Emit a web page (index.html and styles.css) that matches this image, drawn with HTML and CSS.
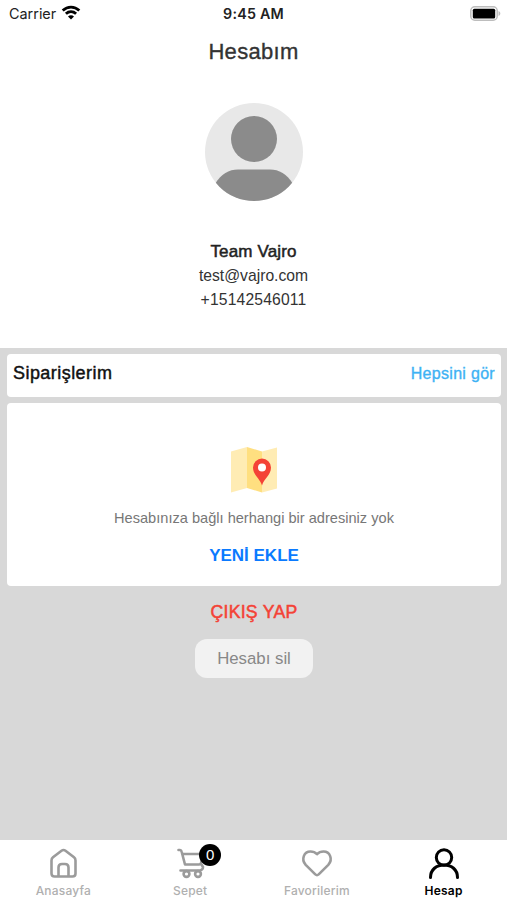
FILE: index.html
```html
<!DOCTYPE html>
<html lang="tr">
<head>
<meta charset="utf-8">
<title>Hesabım</title>
<link rel="stylesheet" href="styles.css">
</head>
<body>
<div class="app">
  <header class="status">
    <div class="carrier"><span>Carrier</span>
      <svg width="20" height="15" viewBox="0 0 20 15" fill="none" stroke="#000" stroke-width="2.8"><path d="M1.700 5.600C6.600.900 13.400.900 18.300 5.600M4.900 8.800c3-2.800 7.200-2.800 10.200 0"/><path d="M7 11.400c1.800-1.600 4.200-1.600 6 0l-3 3z" fill="#000" stroke="none"/></svg>
    </div>
    <div class="clock">9:45 AM</div>
    <svg class="battery" width="31" height="15" viewBox="0 0 31 15"><rect x=".8" y=".8" width="26.4" height="13.4" rx="4" fill="#fff" stroke="#bdbdbd" stroke-width="1.5"/><rect x="2.8" y="2.8" width="22.4" height="9.6" rx="1.5"/><path d="M28.500 5c2.400 1 2.400 4 0 5z" fill="#bdbdbd"/></svg>
  </header>
  <section class="profile">
    <h1>Hesabım</h1>
    <svg class="avatar" width="98" height="98" viewBox="0 0 98 98"><defs><clipPath id="disc"><circle cx="49" cy="49" r="49"/></clipPath></defs><circle cx="49" cy="49" r="49" fill="#e8e8e8"/><g fill="#8b8b8b" clip-path="url(#disc)"><circle cx="49" cy="36" r="23"/><path d="M10 81C16 71 24 66.500 33 66.500h32c9 0 17 4.500 23 14.500v20H10z"/></g></svg>
    <div class="name">Team Vajro</div>
    <div class="mail">test@vajro.com</div>
    <div class="phone">+15142546011</div>
  </section>
  <main class="content">
    <div class="card orders"><span class="orders-title">Siparişlerim</span><span class="see-all">Hepsini gör</span></div>
    <div class="card address">
      <svg class="map" width="46" height="46" viewBox="0 0 46 46"><path d="M0 4.500 16 0v41L0 45.500z" fill="#ffecb4"/><path d="m16 0 15 4.500v41L16 41z" fill="#ffdf80"/><path d="m31 4.500 15-4v41l-15 4z" fill="#ffecb4"/><path d="M31 38.500c-2-7-9-10.500-9-18a9 9 0 0 1 18 0c0 7.500-7 11-9 18z" fill="#f44236"/><circle cx="31" cy="20.500" r="4" fill="#fff"/></svg>
      <p class="empty">Hesabınıza bağlı herhangi bir adresiniz yok</p>
      <div class="add">YENİ EKLE</div>
    </div>
    <div class="logout">ÇIKIŞ YAP</div>
    <button class="delete">Hesabı sil</button>
  </main>
  <nav class="tabs">
    <div class="tab"><svg width="34" height="34" viewBox="0 0 34 34"><path d="M5.500 14.500q0-2 1.500-3.200L15.500 4.700q2-1.400 4 0L28 11.300q1.500 1.200 1.500 3.200v13q0 3-3 3h-18q-3 0-3-3zM12.500 30v-8.500q0-3.500 3.500-3.500h3q3.500 0 3.500 3.500V30"/></svg><span>Anasayfa</span></div>
    <div class="tab"><svg width="34" height="34" viewBox="0 0 34 34"><path d="M5.500 4H7q1.300 0 1.600 1.500L12 18.500h14q1.800 0 2.200-2L30 8H9.300M7.500 24.500h19.500q3-.7 3-3.500l-1.500-2.500"/><circle cx="13.500" cy="28" r="2.900"/><circle cx="25" cy="28" r="2.900"/></svg><b class="badge">0</b><span>Sepet</span></div>
    <div class="tab"><svg width="34" height="34" viewBox="0 0 34 34"><path d="M15.300 28.400 5.700 18.800C.8 13.300 4 5.500 10.500 5.500c2.600 0 4.800.9 6.500 2.700 1.700-1.800 3.900-2.700 6.500-2.700 6.500 0 9.700 7.800 4.800 13.300l-9.600 9.600q-1.700 1.500-3.400 0z"/></svg><span>Favorilerim</span></div>
    <div class="tab active"><svg width="34" height="34" viewBox="0 0 34 34"><circle cx="17" cy="11.500" r="7.700"/><path d="M3.500 31.500C3.500 23.500 9.500 19 17 19s13.500 4.500 13.500 12.500"/></svg><span>Hesap</span></div>
  </nav>
</div>
</body>
</html>
```
FILE: styles.css
```css
* { box-sizing: border-box; }
body { margin: 0; font-family: "Liberation Sans", Arial, sans-serif; background: #fff; }
.app { width: 507px; height: 900px; display: flex; flex-direction: column; overflow: hidden; }
svg { display: block; flex: none; }
.status { height: 28px; display: grid; grid-template-columns: 1fr auto 1fr; align-items: center; padding: 0 6px 2px 9px; font-family: Inter, sans-serif; font-size: 14.400px; color: #222; }
.carrier { display: flex; align-items: center; gap: 5px; }
.carrier svg { margin-top: -1px; }
.clock { font-weight: 600; font-size: 14.300px; letter-spacing: .2px; margin-left: -3px; }
.battery { justify-self: end; }
.profile { height: 320px; display: flex; flex-direction: column; align-items: center; color: #333; }
h1 { margin: 11px 0 0; font-size: 22px; line-height: 26px; font-weight: 400; letter-spacing: .3px; -webkit-text-stroke: .35px; }
.avatar { margin-top: 38px; }
.name { margin-top: 38px; font-size: 17px; line-height: 25px; letter-spacing: .15px; color: #222; -webkit-text-stroke: .5px; }
.mail { font-size: 15.700px; line-height: 24px; }
.phone { font-size: 15.700px; line-height: 24px; letter-spacing: .15px; }
.content { height: 492px; background: #d8d8d8; padding: 6px 6px 0 7px; display: flex; flex-direction: column; align-items: center; }
.card { width: 100%; background: #fff; border-radius: 4px; flex: none; }
.orders { height: 43px; display: flex; justify-content: space-between; align-items: center; padding: 0 6px; margin-bottom: 6px; }
.orders-title { font-size: 18px; letter-spacing: .45px; color: #111; -webkit-text-stroke: .45px; margin-top: -4px; }
.see-all { font-size: 16px; letter-spacing: .3px; color: #3eb2f4; -webkit-text-stroke: .35px; margin-top: -4px; }
.address { height: 183px; display: flex; flex-direction: column; align-items: center; padding-top: 44px; }
.empty { margin: 15px 0 0; font-size: 14.600px; line-height: 20px; color: #777; letter-spacing: 0; }
.add { margin-top: 17px; font-size: 17px; line-height: 22px; font-weight: 700; color: #0a7aff; }
.logout { margin-top: 14px; font-size: 17.700px; line-height: 24px; letter-spacing: .25px; color: #f44236; -webkit-text-stroke: .5px; }
.delete { margin-top: 15px; width: 118px; height: 39px; border: 0; border-radius: 12px; background: #f2f2f2; color: #888; font-family: inherit; font-size: 16.800px; padding: 0; }
.tabs { height: 60px; display: flex; background: #fff; }
.tab { position: relative; flex: 1; display: flex; flex-direction: column; align-items: center; padding-top: 6px; color: #b0b0b0; font: 500 12px/16px Inter, sans-serif; letter-spacing: .2px; }
.tab svg { fill: none; stroke: #9b9b9b; stroke-width: 2.600; stroke-linecap: round; stroke-linejoin: round; }
.tab span { margin-top: 3px; }
.tab.active { color: #000; font-weight: 600; }
.tab.active svg { stroke: #000; stroke-width: 3; }
.badge { position: absolute; left: calc(50% + 9px); top: 4px; width: 22px; height: 22px; border-radius: 50%; background: #000; color: #fff; font: 400 15px/22px "Liberation Sans", sans-serif; letter-spacing: 0; text-align: center; }
```
